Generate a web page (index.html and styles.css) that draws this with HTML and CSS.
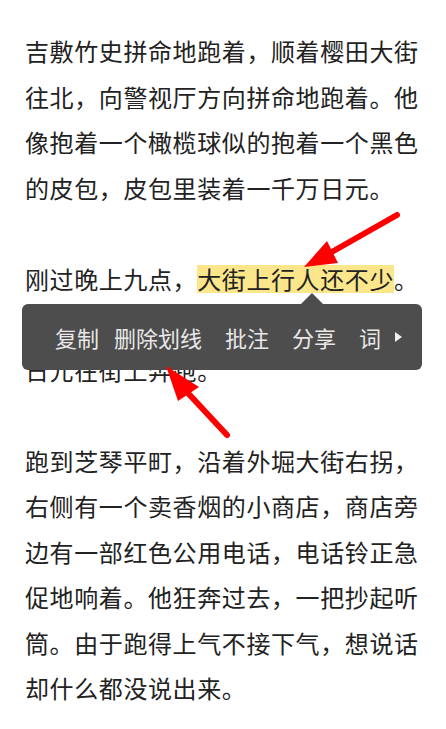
FILE: index.html
```html
<!DOCTYPE html>
<html lang="zh-CN">
<head>
<meta charset="utf-8">
<link rel="stylesheet" href="styles.css">
</head>
<body>
<main class="page">
  <article class="text">
    <p>吉敷竹史拼命地跑着，顺着樱田大街往北，向警视厅方向拼命地跑着。他像抱着一个橄榄球似的抱着一个黑色的皮包，皮包里装着一千万日元。</p>
    <p>刚过晚上九点，<span class="mark">大街上行人还不少</span>。谁也不会想到，有个人正抱着一千万日元在街上奔跑。</p>
    <p>跑到芝琴平町，沿着外堀大街右拐，右侧有一个卖香烟的小商店，商店旁边有一部红色公用电话，电话铃正急促地响着。他狂奔过去，一把抄起听筒。由于跑得上气不接下气，想说话却什么都没说出来。</p>
  </article>

  <div class="menu">
    <span class="item item-copy">复制</span>
    <span class="item">删除划线</span>
    <span class="item">批注</span>
    <span class="item">分享</span>
    <span class="item">词</span>
    <span class="more"></span>
  </div>

  <svg class="arrows" width="446" height="729" viewBox="0 0 446 729">
    <g stroke="#ff0000" stroke-width="6" stroke-linecap="round" fill="none">
      <line x1="397" y1="215" x2="330" y2="253"/>
      <line x1="227" y1="435" x2="186" y2="391"/>
    </g>
    <g fill="#ff0000">
      <polygon points="304,267 327,241 338,263"/>
      <polygon points="166,366 178,401 199,387"/>
    </g>
  </svg>
</main>
</body>
</html>
```

FILE: styles.css
```css
html, body {
  margin: 0;
  padding: 0;
  background: #ffffff;
}

.page {
  position: relative;
  width: 446px;
  height: 729px;
  overflow: hidden;
}

.text {
  padding: 28px 0 0 25px;
  width: 400px;
  font-family: "Noto Sans CJK SC", "Noto Sans", sans-serif;
  font-size: 24px;
  letter-spacing: 0.6px;
  line-height: 45.5px;
  color: #222222;
}

.text p {
  margin: 0 0 45.5px 0;
}

.mark {
  background: linear-gradient(to bottom,
    transparent 4px, #fce68c 4px, #fce68c 32px, transparent 32px);
}

.menu {
  position: absolute;
  left: 22px;
  top: 304px;
  width: 400px;
  height: 66px;
  box-sizing: border-box;
  padding-left: 33px;
  background: #4d4d4d;
  border-radius: 6px;
  display: flex;
  align-items: center;
  gap: 23px;
  font-family: "Noto Sans CJK SC", "Noto Sans", sans-serif;
  font-size: 22px;
  color: #e8e8e8;
}

.menu::before {
  content: "";
  position: absolute;
  left: 279px;
  top: -11px;
  border-left: 11px solid transparent;
  border-right: 11px solid transparent;
  border-bottom: 11px solid #4d4d4d;
}

.item {
  line-height: 30px;
}

.item-copy {
  margin-right: -8px;
}

.more {
  width: 0;
  height: 0;
  margin-left: -9px;
  border-top: 5.5px solid transparent;
  border-bottom: 5.5px solid transparent;
  border-left: 7px solid #f0f0f0;
}

.arrows {
  position: absolute;
  left: 0;
  top: 0;
  pointer-events: none;
}
```
